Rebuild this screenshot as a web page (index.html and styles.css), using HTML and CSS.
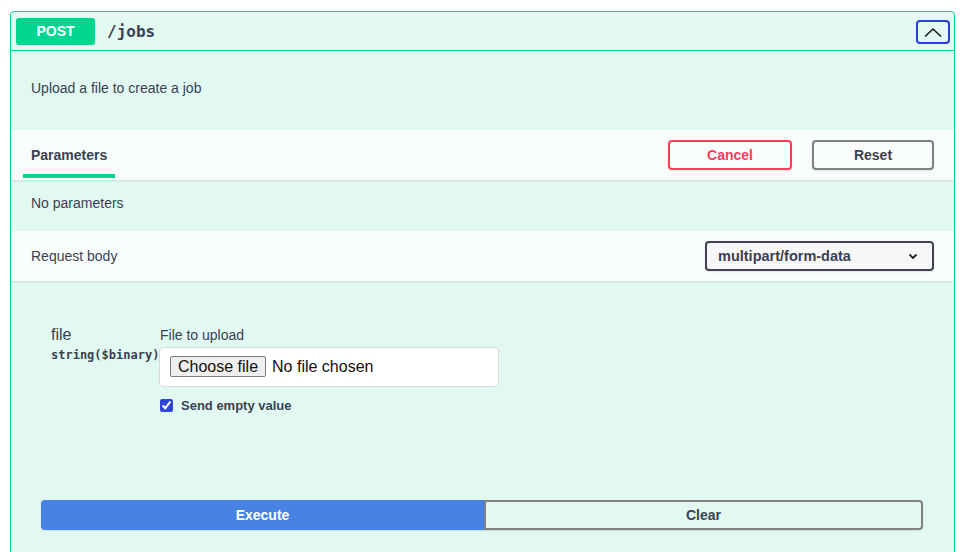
FILE: index.html
```html
<!DOCTYPE html>
<html>
<head>
<meta charset="utf-8">
<link rel="stylesheet" href="styles.css">
</head>
<body>
<div class="page">
  <div class="opblock">
    <div class="summary">
      <span class="method">POST</span>
      <span class="path">/jobs</span>
      <button class="collapse" aria-label="collapse">
        <svg width="20" height="12" viewBox="0 0 20 12"><polyline points="2,10.5 10,3 18,10.5" fill="none" stroke="#1a1a1a" stroke-width="1.6"/></svg>
      </button>
    </div>
    <div class="description">Upload a file to create a job</div>
    <div class="section-header">
      <div class="tab"><span class="tab-label">Parameters</span></div>
      <div class="actions">
        <button class="btn cancel">Cancel</button>
        <button class="btn reset">Reset</button>
      </div>
    </div>
    <div class="no-params">No parameters</div>
    <div class="section-header body-header">
      <div class="body-title">Request body</div>
      <div class="select">
        <span>multipart/form-data</span>
        <svg width="10" height="7" viewBox="0 0 10 7"><polyline points="1.5,1.5 5,5 8.5,1.5" fill="none" stroke="#222" stroke-width="1.8"/></svg>
      </div>
    </div>
    <div class="body-content">
      <div class="param-row">
        <div class="param-name">
          <div class="name">file</div>
          <div class="type">string($binary)</div>
        </div>
        <div class="param-value">
          <div class="field-label">File to upload</div>
          <div class="file-box">
            <button class="choose">Choose file</button>
            <span class="no-file">No file chosen</span>
          </div>
          <label class="empty">
            <input type="checkbox" checked>
            <span>Send empty value</span>
          </label>
        </div>
      </div>
    </div>
    <div class="execute-wrapper">
      <button class="execute">Execute</button>
      <button class="clear">Clear</button>
    </div>
  </div>
</div>
</body>
</html>
```

FILE: styles.css
```css
* { box-sizing: border-box; }
html, body { margin: 0; background: #fff; }
body {
  font-family: "Liberation Sans", Arial, sans-serif;
  color: #3b4151;
  font-size: 14px;
}
.page { padding: 11px 13px 0 10px; }
.opblock {
  border: 1px solid #00d68f;
  border-radius: 4px;
  background: #e2f9f1;
}
.summary {
  display: flex;
  align-items: center;
  height: 39px;
  padding: 0 4px 0 5px;
  border-bottom: 1px solid #00d68f;
}
.method {
  width: 79px;
  height: 27px;
  background: #00d68f;
  color: #fff;
  border-radius: 3px;
  font-weight: bold;
  font-size: 14px;
  display: flex;
  align-items: center;
  justify-content: center;
}
.path {
  margin-left: 12px;
  font-family: "DejaVu Sans Mono", monospace;
  font-weight: bold;
  font-size: 16px;
  color: #3b4151;
  flex: 1;
}
.collapse {
  width: 34px;
  height: 24px;
  border: 2px solid #2b3fd6;
  border-radius: 4px;
  background: transparent;
  padding: 0;
  display: flex;
  align-items: center;
  justify-content: center;
  margin-top: 1px;
}
.description {
  padding: 28px 20px 32px;
  line-height: 19px;
  font-size: 14px;
}
.section-header {
  display: flex;
  align-items: center;
  justify-content: space-between;
  height: 50px;
  padding: 0 20px 0 12px;
  background: #f8fdfb;
  box-shadow: 0 1px 2px rgba(0,0,0,.12);
  position: relative;
}
.tab { align-self: stretch; display: flex; }
.tab-label {
  display: flex;
  align-items: center;
  padding: 6px 8px 0;
  font-weight: bold;
  font-size: 14px;
  border-bottom: 4px solid #00d68f;
  margin-bottom: 2px;
}
.actions { display: flex; gap: 20px; }
.btn {
  height: 30px;
  border: 2px solid #888;
  border-radius: 4px;
  background: transparent;
  font-family: "Liberation Sans", Arial, sans-serif;
  font-weight: bold;
  font-size: 14px;
  color: #3b4151;
  box-shadow: 0 1px 2px rgba(0,0,0,.1);
}
.cancel { width: 124px; border-color: #ff3b5c; color: #ff3b5c; }
.reset { width: 122px; border-color: #808080; }
.no-params {
  padding: 15px 20px 19px;
  line-height: 17px;
}
.body-header { padding-left: 20px; }
.select {
  width: 229px;
  height: 30px;
  border: 2px solid #41444e;
  border-radius: 4px;
  background: #f7f7f7;
  display: flex;
  align-items: center;
  justify-content: space-between;
  padding: 0 14px 0 11px;
  font-weight: bold;
  font-size: 14.5px;
  box-shadow: 0 1px 2px rgba(0,0,0,.1);
}
.body-content { padding: 45px 20px 0 40px; height: 202px; }
.param-row { display: flex; }
.param-name { width: 108px; }
.name { font-size: 16px; line-height: 18px; }
.type {
  margin-top: 4px;
  font-family: "DejaVu Sans Mono", monospace;
  font-weight: bold;
  font-size: 12px;
  white-space: nowrap;
}
.field-label { font-size: 14px; line-height: 18px; margin-left: 1px; }
.file-box {
  margin-top: 3px;
  width: 340px;
  height: 40px;
  background: #fff;
  border: 1px solid #d9d9d9;
  border-radius: 4px;
  display: flex;
  align-items: center;
  padding-left: 10px;
  padding-bottom: 1px;
}
.choose {
  height: 21px;
  padding: 0 7px;
  border: 1px solid #7a7a7a;
  border-radius: 2px;
  background: #efefef;
  font-family: "Liberation Sans", Arial, sans-serif;
  font-size: 16px;
  color: #111;
}
.no-file { font-size: 16px; color: #111; margin-left: 6px; }
.empty {
  display: flex;
  align-items: center;
  margin-top: 11px;
  font-weight: bold;
  font-size: 13px;
}
.empty input {
  margin: 0 8px 0 1px;
  width: 13px;
  height: 13px;
  accent-color: #2e45d8;
}
.execute-wrapper {
  display: flex;
  padding: 17px 30px 40px;
}
.execute, .clear {
  height: 30px;
  font-family: "Liberation Sans", Arial, sans-serif;
  font-weight: bold;
  font-size: 14px;
  box-shadow: 0 1px 2px rgba(0,0,0,.1);
}
.execute {
  width: 443px;
  background: #4683e2;
  color: #fff;
  border: 2px solid #4683e2;
  border-radius: 4px 0 0 4px;
}
.clear {
  width: 439px;
  background: transparent;
  color: #3b4151;
  border: 2px solid #808080;
  border-radius: 0 4px 4px 0;
}
```
